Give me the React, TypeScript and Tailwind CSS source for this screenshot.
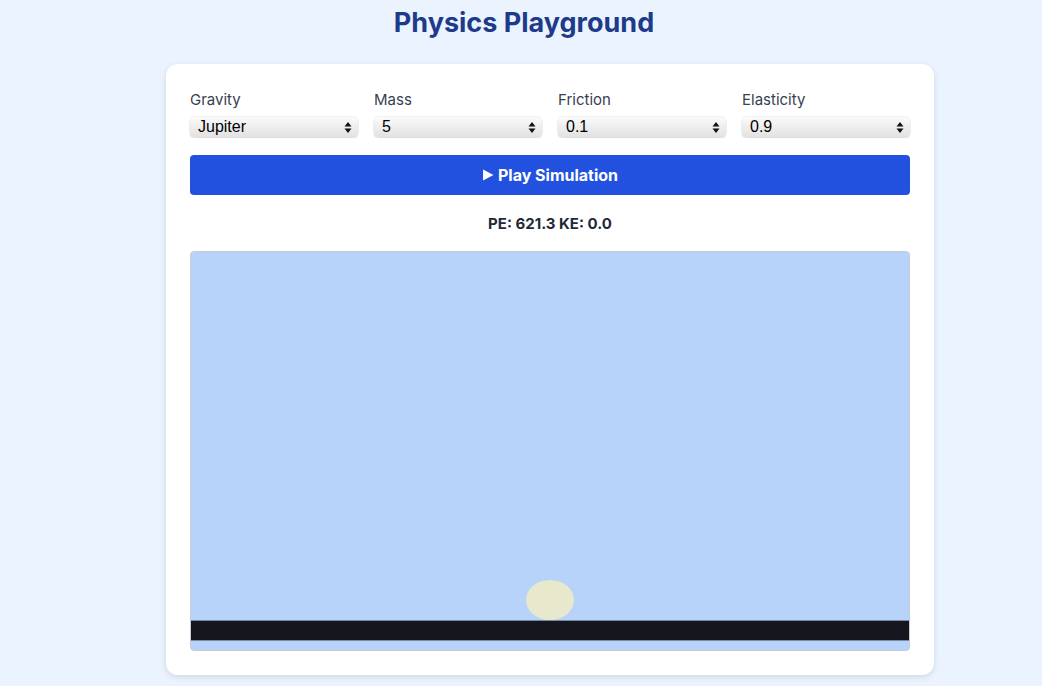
import React from "react";

const font = { fontFamily: "Inter, 'Liberation Sans', sans-serif" };

function Select({ label, value }: { label: string; value: string }) {
  return (
    <div className="flex flex-col">
      <div className="text-[15px] leading-[22px] text-[#374151] mt-[1px] mb-[6px]">{label}</div>
      <div className="relative h-[20px] rounded-[4px] bg-gradient-to-b from-[#fbfbfb] via-[#eeeeee] to-[#e2e2e2] shadow-[0_0_0_0.5px_rgba(0,0,0,0.12),0_1px_1px_rgba(0,0,0,0.08)] flex items-center pl-[8px] pr-[6px]">
        <span className="flex-1 text-[16px] leading-[20px] text-black" style={{ fontFamily: "'Liberation Sans', Arial, sans-serif" }}>
          {value}
        </span>
        <svg width="8" height="13" viewBox="0 0 8 13" className="shrink-0">
          <path d="M4 1 L7.5 5.5 L0.5 5.5 Z" fill="#111" />
          <path d="M4 12 L7.5 7.5 L0.5 7.5 Z" fill="#111" />
        </svg>
      </div>
    </div>
  );
}

export default function App() {
  return (
    <div className="min-h-[686px] bg-[#ebf4fe] pt-[5px] pb-[12px]" style={font}>
      <h1 className="text-center text-[27px] leading-[36px] font-bold text-[#1e3a8a] mb-[23px] pl-[6px]">
        Physics Playground
      </h1>
      <div className="pl-[58px]">
        <div className="mx-auto w-[768px] bg-white rounded-[12px] shadow-[0_2px_6px_rgba(0,0,0,0.12)] p-[24px]">
          <div className="grid grid-cols-4 gap-4">
            <Select label="Gravity" value="Jupiter" />
            <Select label="Mass" value="5" />
            <Select label="Friction" value="0.1" />
            <Select label="Elasticity" value="0.9" />
          </div>
          <button className="mt-[18px] w-full h-[40px] rounded-[4px] bg-[#2251e0] text-white font-bold text-[16px] flex items-center justify-center gap-[4px]">
            <svg width="12" height="12" viewBox="0 0 11 11">
              <path d="M1 0.5 L10.5 5.5 L1 10.5 Z" fill="white" />
            </svg>
            Play Simulation
          </button>
          <div className="mt-[19px] text-center font-bold text-[15px] leading-[20px] text-[#1f2937]">
            PE: 621.3 KE: 0.0
          </div>
          <div className="mt-[17px] h-[400px] rounded-[4px] border border-[#c8ccd2] bg-[#b7d3fa] flex flex-col overflow-hidden">
            <div className="flex-1 flex items-end">
              <div className="ml-[335px] w-[48px] h-[40px] rounded-[50%] bg-[#e8e9cc]" />
            </div>
            <div className="h-[21px] bg-[#15161e] border-t border-b border-[#7a8aa2]" />
            <div className="h-[9px]" />
          </div>
        </div>
      </div>
    </div>
  );
}
